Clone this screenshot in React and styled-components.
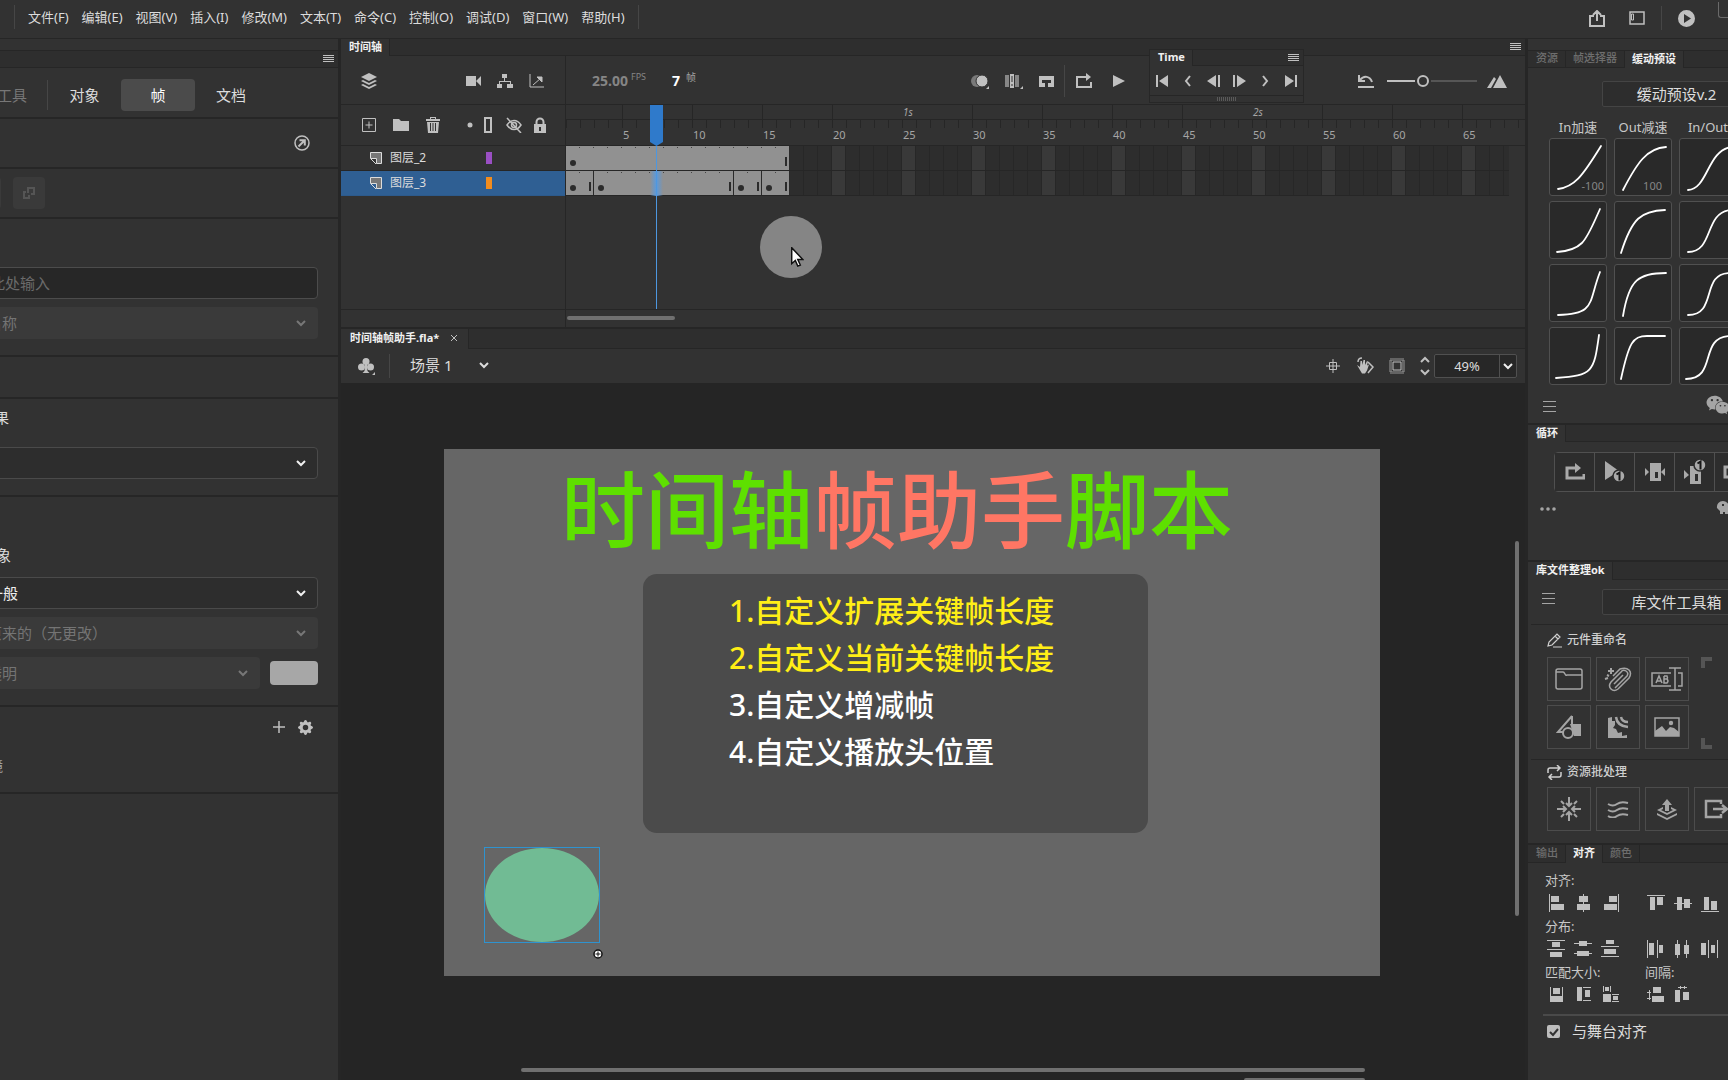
import React from "react";
import styled, { createGlobalStyle, css } from "styled-components";
import { FaWeixin } from "react-icons/fa";
import { BsGearFill } from "react-icons/bs";

const c = {
  panel: "#323232",
  bar: "#2e2e2e",
  line: "#262626",
  cell: "#2d2d2d",
  canvas: "#252525",
  field: "#3a3a3a",
  fieldDark: "#272727",
  icon: "#c0c0c0",
  text: "#dcdcdc",
  dim: "#6e6e6e",
  frame: "#919191",
};

const FRAME = 14;

const Global = createGlobalStyle`
  * { box-sizing: border-box; }
  body {
    margin: 0;
    background: ${c.panel};
    color: ${c.text};
    font-family: "Noto Sans", "Noto Sans CJK SC", sans-serif;
    font-size: 13px;
    line-height: 18px;
  }
  button, input, select { font: inherit; color: inherit; margin: 0; }
  button { background: none; border: 0; padding: 0; }
`;

/* ---------- layout ---------- */
const Screen = styled.div`
  display: flex;
  flex-direction: column;
  height: 100vh;
  overflow: hidden;
`;
const Body = styled.div`
  display: grid;
  grid-template-columns: 338px minmax(0, 1fr) 200px;
  column-gap: 3px;
  flex: 1;
  min-height: 0;
  background: ${c.line};
`;
const Side = styled.aside`
  background: ${c.panel};
  overflow: hidden;
`;
const Middle = styled.main`
  display: flex;
  flex-direction: column;
  min-width: 0;
  min-height: 0;
`;

/* ---------- menu bar ---------- */
const MenuBar = styled.header`
  display: flex;
  align-items: center;
  justify-content: space-between;
  flex: none;
  height: 39px;
  padding: 0 0 4px 14px;
  border-bottom: 1px solid ${c.line};
`;
const Menu = styled.nav`
  display: flex;
  align-items: center;
  gap: 13px;
`;
const MenuItem = styled.button`
  white-space: nowrap;
`;
const VLine = styled.span`
  flex: none;
  width: 1px;
  height: ${(p) => p.$h || 24}px;
  background: ${(p) => p.$color || "#464646"};
`;
const MenuTools = styled.div`
  display: flex;
  align-items: center;
  align-self: stretch;
  padding-top: 2px;
`;
const MenuTool = styled.button`
  display: grid;
  place-items: center;
  width: 40px;
  height: 32px;
  color: ${c.icon};
`;
const EdgeBox = styled.span`
  align-self: flex-start;
  width: 10px;
  height: 16px;
  margin-left: 12px;
  border: solid #6a6a6a;
  border-width: 0 0 1px 1px;
  border-bottom-left-radius: 3px;
`;

/* ---------- shared panel parts ---------- */
const DockStrip = styled.div`
  height: 12px;
  border-bottom: 1px solid ${c.line};
`;
const TabBar = styled.div`
  display: flex;
  align-items: stretch;
  flex: none;
  height: ${(p) => p.$h || 17}px;
  background: ${c.bar};
  border-bottom: 1px solid ${c.line};
`;
const Tab = styled.button`
  flex: none;
  padding: 0 7px 2px 8px;
  border-right: 1px solid ${c.line};
  font-size: 11px;
  line-height: 14px;
  font-weight: ${(p) => (p.$on ? 700 : 500)};
  color: ${(p) => (p.$on ? "#f0f0f0" : c.dim)};
  background: ${(p) => (p.$on ? c.panel : "transparent")};
  margin-bottom: ${(p) => (p.$on ? "-1px" : 0)};
  white-space: nowrap;
  & + & { padding-left: 7px; }
`;
const DocTab = styled(Tab).attrs({ as: "div" })`
  display: flex;
  align-items: center;
  gap: 11px;
  padding-left: 9px;
  padding-right: 10px;
`;
const MenuButton = styled.button`
  display: grid;
  place-items: center;
  width: 12px;
  height: 15px;
  margin-left: auto;
  margin-right: 4px;
  color: ${c.icon};
`;
const IconButton = styled.button`
  display: grid;
  place-items: center;
  flex: none;
  width: ${(p) => p.$w || 16}px;
  height: ${(p) => p.$h || 18}px;
  color: ${(p) => p.$color || c.icon};
`;
const Rule = styled.hr`
  height: ${(p) => p.$h || 1}px;
  margin: 0;
  border: 0;
  background: ${(p) => p.$color || c.line};
`;

/* ---------- properties panel ---------- */
const Section = styled.section`
  display: flex;
  flex-direction: column;
  gap: ${(p) => p.$gap || 8}px;
  margin-left: -36px;
  padding: ${(p) => p.$pad || "0"};
  min-height: ${(p) => p.$h || 0}px;
  border-bottom: 2px solid ${c.line};
`;
const ModeRow = styled.div`
  display: flex;
  align-items: center;
  height: 51px;
  padding-top: 5px;
  border-bottom: 2px solid ${c.line};
  margin-left: -3px;
`;
const ModeButton = styled.button`
  flex: none;
  width: ${(p) => p.$w}px;
  height: 32px;
  border-radius: 4px;
  font-size: 15px;
  text-align: center;
  color: ${(p) => (p.$off ? "#777" : p.$on ? "#fff" : c.text)};
  background: ${(p) => (p.$on ? "#4b4b4b" : "transparent")};
`;
const ToolLine = styled.div`
  display: flex;
  align-items: center;
  justify-content: ${(p) => p.$justify || "flex-end"};
  gap: ${(p) => p.$gap || 12}px;
  height: ${(p) => p.$h || 48}px;
  flex: none;
`;
const DisabledTool = styled.button`
  display: grid;
  place-items: center;
  width: 32px;
  height: 32px;
  border-radius: 4px;
  background: ${c.field};
  color: #555;
`;
const GroupLabel = styled.label`
  padding-left: ${(p) => p.$left || 17}px;
  font-size: ${(p) => p.$size || 15}px;
  line-height: 20px;
  color: ${(p) => p.$color || c.text};
  margin-bottom: ${(p) => p.$gap || 0}px;
`;
const TextBox = styled.input`
  width: 100%;
  height: 32px;
  padding: 0 10px;
  border: 1px solid #4c4c4c;
  border-radius: 4px;
  background: ${c.fieldDark};
  font-size: 15px;
  &::placeholder { color: #6b6b6b; opacity: 1; }
`;
const SelectWrap = styled.div`
  position: relative;
  flex: ${(p) => (p.$grow ? 1 : "none")};
  color: ${(p) => (p.$off ? "#777" : "#f0f0f0")};
  > svg {
    position: absolute;
    right: 12px;
    top: 12px;
    pointer-events: none;
  }
`;
const SelectBox = styled.select`
  display: block;
  appearance: none;
  width: 100%;
  height: 32px;
  padding: 0 30px 0 23px;
  border-radius: 4px;
  font-size: 15px;
  opacity: 1;
  ${(p) =>
    p.disabled
      ? css`border: 0; background: ${c.field}; color: #747474;`
      : css`border: 1px solid #4a4a4a; background: #2d2d2d; color: #eee;`}
`;
const SwatchRow = styled.div`
  display: flex;
  align-items: center;
  gap: 10px;
`;
const Swatch = styled.button`
  width: 48px;
  height: 24px;
  border-radius: 4px;
  background: #a7a7a7;
`;

/* ---------- timeline ---------- */
const Timeline = styled.section`
  position: relative;
  flex: none;
  background: ${c.panel};
  border-bottom: 2px solid ${c.line};
`;
const TimelineGrid = styled.div`
  display: grid;
  grid-template-columns: 225px minmax(0, 1fr);
`;
const LayerColumn = styled.div`
  border-right: 1px solid ${c.line};
`;
const FrameColumn = styled.div`
  position: relative;
  min-width: 0;
`;
const Tools = styled.div`
  display: flex;
  align-items: center;
  height: 49px;
  padding: 2px ${(p) => p.$right}px 0 ${(p) => p.$left}px;
  border-bottom: 1px solid ${c.line};
`;
const LayerTools = styled(Tools)`
  height: 41px;
  padding-top: 0;
`;
const Push = styled.span`
  flex: 1;
`;
const Space = styled.span`
  flex: none;
  width: ${(p) => p.$w}px;
`;
const LayerRow = styled.div`
  display: grid;
  grid-template-columns: 12px 88px 6px;
  align-items: center;
  column-gap: 8px;
  height: 25px;
  padding-left: 29px;
  border-bottom: 1px solid ${(p) => (p.$on ? "#2c5a8c" : c.line)};
  background: ${(p) => (p.$on ? "#2f5f93" : "transparent")};
  font-size: 12px;
`;
const LayerName = styled.span`
  white-space: nowrap;
`;
const LayerColor = styled.span`
  width: 6px;
  height: 12px;
  background: ${(p) => p.$color};
`;
const Lower = styled.div`
  height: 114px;
  border-bottom: 1px solid ${c.line};
`;
const ScrollStrip = styled.div`
  display: flex;
  align-items: center;
  height: 17px;
  padding: 0 0 1px 1px;
`;
const Thumb = styled.div`
  flex: none;
  width: ${(p) => p.$w};
  height: ${(p) => p.$h};
  border-radius: 2px;
  background: #707070;
`;
const Fps = styled.span`
  color: #858585;
  font-size: 14px;
  font-weight: 700;
  margin-right: 3px;
`;
const Unit = styled.sup`
  align-self: flex-start;
  margin-top: 11px;
  font-size: ${(p) => p.$size}px;
  line-height: 16px;
  color: ${(p) => p.$color || "#a0a0a0"};
`;
const FrameNo = styled.span`
  margin-left: 26px;
  margin-right: 6px;
  width: 8px;
  font-size: 14px;
  font-weight: 700;
  color: #fff;
`;
const Zoomer = styled.input`
  appearance: none;
  width: 90px;
  height: 14px;
  margin: 0 10px 0 12px;
  background: linear-gradient(90deg, #c0c0c0 28px, transparent 28px 44px, #565656 44px) center / 100% 2px no-repeat;
  &::-webkit-slider-thumb {
    appearance: none;
    width: 12px;
    height: 12px;
    border: 2px solid #c0c0c0;
    border-radius: 50%;
    background: ${c.panel};
  }
`;
const Ruler = styled.div`
  height: 41px;
  overflow: hidden;
  border-bottom: 1px solid ${c.line};
`;
const Seconds = styled.div`
  display: flex;
  height: 15px;
  border-bottom: 1px solid ${c.line};
`;
const SecondCell = styled.span`
  flex: none;
  width: ${(p) => p.$n * FRAME}px;
  border-left: 1px solid ${(p) => (p.$line ? c.line : "transparent")};
  font-size: 10px;
  line-height: 14px;
  font-style: italic;
  color: #a5a5a5;
`;
const Numbers = styled.div`
  display: flex;
  height: 25px;
  padding-top: 7px;
  background: repeating-linear-gradient(90deg, ${c.line} 0 1px, transparent 1px ${FRAME}px) top / 100% 8px no-repeat;
`;
const NumberCell = styled.span`
  flex: none;
  width: ${(p) => p.$n * FRAME}px;
  padding-left: 1px;
  font-size: 11px;
  line-height: 16px;
  color: #a5a5a5;
`;
const Track = styled.div`
  display: flex;
  height: 25px;
  margin-right: 16px;
  border-bottom: 1px solid ${c.line};
  background:
    repeating-linear-gradient(90deg, transparent 0 56px, #393939 56px 69px, transparent 69px 70px),
    repeating-linear-gradient(90deg, transparent 0 13px, #272727 13px 14px),
    ${c.cell};
`;
const Span = styled.div`
  display: flex;
  align-items: flex-end;
  justify-content: space-between;
  flex: none;
  width: ${(p) => p.$n * FRAME}px;
  padding: 0 3px 4px 4px;
  border-right: 1px solid #2a2a2a;
  background:
    repeating-linear-gradient(90deg, transparent 0 13px, #444 13px 14px) 0 1px / 100% 1px no-repeat,
    ${c.frame};
`;
const KeyDot = styled.i`
  width: 6px;
  height: 6px;
  border-radius: 50%;
  background: #2b2b2b;
`;
const EndBar = styled.i`
  width: 2px;
  height: 9px;
  margin-right: -1px;
  background: #2b2b2b;
`;
const Playhead = styled.div`
  position: absolute;
  left: 84px;
  top: 49px;
  width: 13px;
  height: 204px;
  pointer-events: none;
`;
const HeadFlag = styled.div`
  height: 41px;
  background: #2f7acb;
  clip-path: polygon(0 0, 100% 0, 100% 37px, 50% 100%, 0 37px);
`;
const HeadGlow = styled.div`
  height: 25px;
  margin-top: 25px;
  background: linear-gradient(90deg, transparent, #5a9ade 50%, transparent);
`;
const HeadLine = styled.div`
  position: absolute;
  left: 6px;
  top: 41px;
  bottom: 0;
  width: 1px;
  background: #4d97e0;
`;
const ClickHalo = styled.div`
  position: absolute;
  left: 419px;
  top: 177px;
  width: 62px;
  height: 62px;
  border-radius: 50%;
  background: #858585;
  > svg { position: absolute; left: 31px; top: 31px; }
`;
const FloatPanel = styled.section`
  position: absolute;
  right: 221px;
  top: 10px;
  width: 155px;
  border: 1px solid #272727;
  background: ${c.panel};
`;
const FloatButtons = styled.div`
  display: flex;
  justify-content: space-between;
  align-items: center;
  height: 29px;
  padding: 0 4px;
`;
const Grip = styled.div`
  height: 7px;
  border-top: 1px solid ${c.line};
  background: repeating-linear-gradient(90deg, #5a5a5a 0 1px, transparent 1px 2px) center / 20px 4px no-repeat;
`;

/* ---------- document ---------- */
const DocTools = styled.div`
  display: flex;
  align-items: center;
  flex: none;
  height: 34px;
  padding: 0 8px 0 16px;
  background: ${c.panel};
`;
const SceneButton = styled.button`
  display: flex;
  align-items: center;
  gap: 27px;
  margin-left: 20px;
  padding-bottom: 2px;
  font-size: 15px;
`;
const Stepper = styled.div`
  display: grid;
  margin: 0 2px 0 13px;
`;
const ZoomField = styled.div`
  display: flex;
  height: 24px;
  width: 83px;
  border: 1px solid #505050;
  border-radius: 2px;
  background: ${c.fieldDark};
`;
const ZoomInput = styled.input`
  width: 65px;
  border: 0;
  border-right: 1px solid #505050;
  background: none;
  padding: 0;
  text-align: center;
`;
const CloseTab = styled.button`
  width: 8px;
  height: 16px;
  color: ${c.icon};
`;
const CanvasArea = styled.section`
  display: grid;
  grid-template-columns: minmax(0, 1fr) 16px;
  grid-template-rows: minmax(0, 1fr) 12px;
  flex: 1;
  min-height: 0;
  background: ${c.canvas};
`;
const CanvasView = styled.div`
  overflow: hidden;
  padding: 66px 129px 0 103px;
`;
const Stage = styled.div`
  position: relative;
  aspect-ratio: 16 / 9;
  background: #666;
`;
const VScroll = styled.div`
  padding: 158px 0 0 6px;
`;
const HScroll = styled.div`
  display: flex;
  flex-direction: column;
  gap: 6px;
  align-items: flex-end;
  padding-right: 160px;
  padding-left: 180px;
  grid-column: 1 / -1;
`;
const StageTitle = styled.h1`
  position: absolute;
  left: 117px;
  top: 7px;
  margin: 0;
  font-family: "Noto Sans CJK SC", sans-serif;
  font-size: 84px;
  line-height: 100px;
  font-weight: 500;
  white-space: nowrap;
  color: #5ee000;
`;
const TitleAccent = styled.span`
  color: #ff7664;
`;
const StageCard = styled.ol`
  position: absolute;
  left: 199px;
  top: 125px;
  width: 505px;
  height: 259px;
  margin: 0;
  padding: 13px 0 0 86px;
  border-radius: 14px;
  background: #4b4b4b;
  list-style: none;
`;
const StageLine = styled.li`
  font-size: 30px;
  line-height: 47px;
  font-weight: 500;
  white-space: nowrap;
  color: ${(p) => (p.$hot ? "#ffee16" : "#fff")};
`;
const Selection = styled.div`
  position: absolute;
  left: 40px;
  top: 398px;
  width: 116px;
  height: 96px;
  border: 1px solid #2f93cf;
`;
const Oval = styled.div`
  height: 100%;
  border-radius: 50%;
  background: #71bb94;
`;
const Pivot = styled.div`
  position: absolute;
  left: 149px;
  top: 500px;
  width: 10px;
  height: 10px;
  > svg { display: block; }
`;

/* ---------- right dock ---------- */
const Block = styled.section`
  display: flex;
  flex-direction: column;
  height: ${(p) => (p.$h ? p.$h + "px" : "auto")};
  padding: ${(p) => p.$pad};
  border-bottom: 2px solid ${c.line};
`;
const WideButton = styled.button`
  flex: none;
  width: 160px;
  height: 26px;
  margin-left: auto;
  margin-right: -34px;
  padding-right: 11px;
  border: 1px solid #444;
  border-radius: 2px;
  background: #2d2d2d;
  font-size: 15px;
  text-align: center;
  white-space: nowrap;
`;
const EaseGrid = styled.div`
  display: grid;
  grid-template-columns: repeat(3, 58px);
  gap: 5px 7px;
  padding-left: 21px;
`;
const EaseHead = styled.span`
  height: 18px;
  margin-top: 11px;
  margin-bottom: 2px;
  text-align: center;
  white-space: nowrap;
  color: #c8c8c8;
`;
const EaseTile = styled.button`
  position: relative;
  width: 58px;
  height: 58px;
  border: 1px solid #505050;
  border-radius: 3px;
  background: #292929;
  color: #fff;
  > svg { display: block; }
`;
const EaseValue = styled.span`
  position: absolute;
  right: ${(p) => p.$r}px;
  bottom: 2px;
  font-size: 11px;
  line-height: 14px;
  color: #868686;
`;
const Foot = styled.div`
  display: flex;
  align-items: flex-start;
  justify-content: space-between;
  margin-top: 8px;
  margin-right: -4px;
  margin-left: ${(p) => p.$left}px;
`;
const LoopGroup = styled.div`
  display: flex;
  flex: none;
  width: 240px;
  margin-left: 26px;
  border: 1px solid #505050;
  border-radius: 4px;
`;
const LoopButton = styled.button`
  display: grid;
  place-items: center;
  flex: none;
  width: 40px;
  height: 38px;
  border-right: 1px solid #505050;
  background: #2d2d2d;
  color: #a9a9a9;
`;
const LibraryHead = styled.div`
  display: flex;
  align-items: flex-start;
  padding-left: 14px;
`;
const LibraryBody = styled.div`
  display: flex;
  flex-direction: column;
  margin-top: 9px;
  > hr { margin-left: 3px; }
`;
const SubHead = styled.h3`
  display: flex;
  align-items: center;
  gap: 5px;
  height: 20px;
  margin: ${(p) => p.$margin};
  padding-left: 19px;
  font-size: 12px;
  font-weight: 500;
  color: #cfcfcf;
`;
const TileArea = styled.div`
  display: flex;
  gap: 12px;
  padding-left: 19px;
  margin-bottom: 10px;
`;
const TileGrid = styled.div`
  display: grid;
  grid-template-columns: repeat(${(p) => p.$cols}, 44px);
  gap: 4px 5px;
`;
const Tile = styled.button`
  display: grid;
  place-items: center;
  width: 44px;
  height: 44px;
  border: 1px solid #4c4c4c;
  color: #a5a5a5;
`;
const Corners = styled.div`
  display: flex;
  flex-direction: column;
  justify-content: space-between;
  color: #555;
`;
const AlignBlock = styled.section`
  padding: 8px 0 0 17px;
`;
const AlignGrid = styled.div`
  display: grid;
  grid-template-columns: 100px 100px;
  gap: 5px 0;
  width: 200px;
  color: #c8c8c8;
`;
const AlignIcons = styled.div`
  display: flex;
  gap: 9px;
  padding-left: 2px;
`;
const AlignRule = styled(Rule)`
  margin-top: 10px;
  margin-left: -2px;
`;
const CheckRow = styled.label`
  display: flex;
  align-items: center;
  gap: 12px;
  margin-top: 6px;
  padding-left: 2px;
  font-size: 15px;
`;
const Check = styled.input`
  appearance: none;
  width: 13px;
  height: 13px;
  border-radius: 2px;
  background: #bdbdbd url("data:image/svg+xml,%3Csvg xmlns='http://www.w3.org/2000/svg' viewBox='0 0 13 13'%3E%3Cpath d='M3 7l3 3 5-6' fill='none' stroke='%23323232' stroke-width='2'/%3E%3C/svg%3E");
`;

/* ---------- drawings ---------- */
const Svg = ({ w = 16, h = w, line, sw = 1.5, children }) => (
  <svg
    width={w}
    height={h}
    viewBox={`0 0 ${w} ${h}`}
    fill={line ? "none" : "currentColor"}
    stroke={line ? "currentColor" : "none"}
    strokeWidth={sw}
    aria-hidden="true"
  >
    {children}
  </svg>
);
const Burger = ({ w = 11, gap = 1, t = 1, n = 4 }) => (
  <Svg w={w} h={(n - 1) * (gap + t) + t}>
    {Array.from({ length: n }, (_, i) => (
      <rect key={i} y={i * (gap + t)} width={w} height={t} />
    ))}
  </Svg>
);
const Chevron = ({ up }) => (
  <Svg w={10} h={8} line sw={2}>
    <path d={up ? "M1 6l4-4 4 4" : "M1 2l4 4 4-4"} />
  </Svg>
);
const Rects = ({ list }) => (
  <Svg w={18}>
    {list.map(([x, y, w, h], i) => (
      <rect key={i} x={x} y={y} width={w} height={h} />
    ))}
  </Svg>
);

const menus = [
  "文件(F)", "编辑(E)", "视图(V)", "插入(I)", "修改(M)", "文本(T)",
  "命令(C)", "控制(O)", "调试(D)", "窗口(W)", "帮助(H)",
];

const curves = [
  ["M8 50C24 48 32 38 51 7", "M8 51C22 24 32 9 51 8", "M8 51C28 50 27 12 51 8"],
  ["M7 50C34 48 36 38 50 7", "M6 51C17 16 26 9 50 8", "M8 50C34 50 24 11 50 8"],
  ["M8 50C46 49 38 38 50 7", "M8 51C14 14 24 8 51 8", "M8 50C38 50 20 8 50 8"],
  ["M6 50C44 48 44 42 49 7", "M6 51C14 14 18 8 32 8H50", "M6 51C38 51 18 9 50 8"],
];

const layers = [
  { name: "图层_2", color: "#9a4fc4", spans: [16] },
  { name: "图层_3", color: "#f28c1e", spans: [2, 10, 2, 2], on: true },
];

const marks = Array.from({ length: 13 }, (_, i) => (i + 1) * 5);

const align = {
  h: [
    ["左对齐", [[2, 0, 1, 18], [4, 2, 8, 6], [4, 10, 13, 6]]],
    ["水平居中", [[9, 0, 1, 18], [5, 2, 9, 6], [3, 10, 13, 6]]],
    ["右对齐", [[17, 0, 1, 18], [8, 2, 8, 6], [3, 10, 13, 6]]],
  ],
  v: [
    ["顶对齐", [[0, 1, 18, 1], [3, 3, 5, 13], [10, 3, 6, 8]]],
    ["垂直居中", [[0, 9, 18, 1], [3, 3, 5, 13], [10, 5, 6, 9]]],
    ["底对齐", [[0, 17, 18, 1], [3, 3, 5, 13], [10, 7, 6, 9]]],
  ],
  dh: [
    ["顶部分布", [[0, 0, 18, 1], [5, 2, 8, 5], [0, 9, 18, 1], [3, 12, 12, 5]]],
    ["垂直居中分布", [[0, 3, 18, 1], [5, 1, 8, 5], [0, 13, 18, 1], [3, 11, 12, 5]]],
    ["底部分布", [[5, 0, 8, 4], [0, 6, 18, 1], [3, 9, 12, 5], [0, 16, 18, 1]]],
  ],
  dv: [
    ["左侧分布", [[0, 0, 1, 18], [2, 3, 5, 12], [10, 0, 1, 18], [12, 5, 4, 8]]],
    ["水平居中分布", [[3, 0, 1, 18], [1, 4, 5, 11], [12, 0, 1, 18], [10, 5, 5, 9]]],
    ["右侧分布", [[0, 3, 5, 12], [7, 0, 1, 18], [10, 5, 4, 8], [16, 0, 1, 18]]],
  ],
  size: [
    ["匹配宽度", [[3, 1, 1, 9], [6, 2, 7, 6], [15, 1, 1, 9], [3, 10, 13, 6]]],
    ["匹配高度", [[3, 1, 5, 14], [9, 1, 8, 1], [11, 4, 5, 7], [9, 14, 8, 1]]],
    ["匹配宽高", [[2, 0, 1, 6], [4, 1, 4, 4], [9, 0, 1, 6], [2, 8, 8, 8], [11, 8, 7, 1], [12, 10, 5, 4], [11, 15, 7, 1]]],
  ],
  space: [
    ["垂直间隔", [[2, 4, 1, 10], [0, 6, 4, 1], [0, 12, 4, 1], [6, 1, 8, 6], [5, 10, 12, 6]]],
    ["水平间隔", [[4, 1, 9, 1], [6, 0, 1, 3], [10, 0, 1, 3], [1, 4, 5, 12], [9, 6, 6, 8]]],
  ],
};

const AlignSet = ({ items }) => (
  <AlignIcons>
    {items.map(([label, list]) => (
      <IconButton key={label} $w={18} aria-label={label}>
        <Rects list={list} />
      </IconButton>
    ))}
  </AlignIcons>
);

const Picker = ({ id, label, value, off, grow }) => (
  <SelectWrap $off={off} $grow={grow}>
    <SelectBox id={id} aria-label={label} disabled={off} defaultValue={value}>
      <option>{value}</option>
    </SelectBox>
    <Chevron />
  </SelectWrap>
);

const Properties = () => (
  <Side>
    <DockStrip />
    <TabBar>
      <MenuButton aria-label="面板菜单"><Burger /></MenuButton>
    </TabBar>
    <ModeRow>
      <ModeButton $w={30} $off>工具</ModeButton>
      <Space $w={20} />
      <VLine $h={30} />
      <ModeButton $w={73}>对象</ModeButton>
      <ModeButton $w={74} $on>帧</ModeButton>
      <ModeButton $w={72}>文档</ModeButton>
    </ModeRow>
    <Section $pad="0 28px 0 0">
      <ToolLine>
        <IconButton aria-label="转到">
          <Svg w={16} line>
            <circle cx="8" cy="8" r="7" />
            <path d="M4.500 11.500L10 6M5.500 5.200H10.800V10.500" strokeWidth="2" />
          </Svg>
        </IconButton>
      </ToolLine>
    </Section>
    <Section $pad="0 0 0 5px">
      <ToolLine $justify="flex-start">
        <DisabledTool disabled aria-label="创建补间" />
        <DisabledTool disabled aria-label="交换">
          <Svg w={16} line sw={2}>
            <path d="M7 8V3h6v6h-3" />
            <path d="M5 7H3v6h5v-3" />
          </Svg>
        </DisabledTool>
      </ToolLine>
    </Section>
    <Section $pad="48px 20px 16px 0">
      <TextBox aria-label="标签名称" placeholder="在此处输入" />
      <Picker label="标签类型" value="名称" off />
    </Section>
    <Section $h={42} />
    <Section $pad="9px 20px 16px 0">
      <GroupLabel htmlFor="effect" $size={14} $gap={11}>效果</GroupLabel>
      <Picker id="effect" value="" />
    </Section>
    <Section $pad="48px 20px 16px 0">
      <GroupLabel htmlFor="blend" $gap={4}>对象</GroupLabel>
      <Picker id="blend" value="一般" />
      <Picker label="呈现" value="原来的（无更改）" off />
      <SwatchRow>
        <Picker label="背景" value="透明" off grow />
        <Swatch aria-label="背景颜色" />
      </SwatchRow>
    </Section>
    <Section $pad="10px 25px 16px 0" $gap={19}>
      <ToolLine $h={20} $gap={11}>
        <IconButton $w={14} aria-label="添加滤镜">
          <Svg w={12} line><path d="M6 0v12M0 6h12" /></Svg>
        </IconButton>
        <IconButton aria-label="滤镜选项"><BsGearFill size={15} /></IconButton>
      </ToolLine>
      <GroupLabel as="span" $left={11} $size={14} $color="#a0a0a0">滤镜</GroupLabel>
    </Section>
  </Side>
);

const Frames = () => (
  <FrameColumn>
    <Tools $left={26} $right={18}>
      <Fps>25.00</Fps>
      <Unit $size={9} $color="#858585">FPS</Unit>
      <FrameNo>7</FrameNo>
      <Unit $size={10}>帧</Unit>
      <Push />
      <IconButton $w={18} aria-label="绘图纸外观">
        <Svg w={18} h={16}>
          <circle cx="6" cy="8" r="6" opacity=".5" />
          <circle cx="11" cy="8" r="6" stroke={c.panel} strokeWidth="1" />
          <path d="M18 13v3h-3z" />
        </Svg>
      </IconButton>
      <Space $w={16} />
      <IconButton $w={18} aria-label="编辑多个帧">
        <Svg w={18} h={16}>
          <path d="M0 2h4v12H0zM10 2h4v12h-4z" opacity=".6" />
          <path d="M5 1h4v14H5zM6.500 3v6h1V3zM6.500 11v2h1v-2z" fillRule="evenodd" />
          <path d="M18 13v3h-3z" />
        </Svg>
      </IconButton>
      <Space $w={16} />
      <IconButton aria-label="插入帧">
        <Svg w={16} h={14}>
          <path d="M0 2h15v11H9V9h3V6H3v3h3v4H0z" />
          <path d="M7 8h2v5H7z" fill={c.panel} />
        </Svg>
      </IconButton>
      <Space $w={9} />
      <VLine $h={32} />
      <Space $w={11} />
      <IconButton aria-label="循环">
        <Svg w={16} line sw={2}>
          <path d="M5 4H1v10h14V9M5 4h6" />
          <path d="M10 0v8l5-4z" fill="currentColor" stroke="none" />
        </Svg>
      </IconButton>
      <Space $w={19} />
      <IconButton aria-label="播放">
        <Svg w={14}><path d="M1 1v12l12-6z" /></Svg>
      </IconButton>
      <Space $w={230} />
      <IconButton $w={18} aria-label="重置缩放">
        <Svg w={16} line sw={2}>
          <path d="M1 2v6h6M2 7c4-5 10-4 12 2M0 14h16" />
        </Svg>
      </IconButton>
      <Zoomer type="range" min="0" max="100" defaultValue="38" aria-label="时间轴缩放" />
      <IconButton $w={20} aria-label="放大时间轴">
        <Svg w={20} h={14}>
          <path d="M6 14l7-13 7 13zM0 14L7 3l2 2-5 9z" />
        </Svg>
      </IconButton>
    </Tools>
    <Ruler>
      <Seconds>
        <SecondCell $n={4} />
        {marks.map((m) => (
          <SecondCell key={m} $n={5} $line={m % 25 !== 0}>{m % 25 === 0 ? `${m / 25}s` : ""}</SecondCell>
        ))}
      </Seconds>
      <Numbers>
        <NumberCell $n={4} />
        {marks.map((m) => <NumberCell key={m} $n={5}>{m}</NumberCell>)}
      </Numbers>
    </Ruler>
    {layers.map((l) => (
      <Track key={l.name}>
        {l.spans.map((n, i) => (
          <Span key={i} $n={n}><KeyDot /><EndBar /></Span>
        ))}
      </Track>
    ))}
    <Lower />
    <ScrollStrip><Thumb $w="108px" $h="4px" /></ScrollStrip>
    <Playhead><HeadFlag /><HeadGlow /><HeadLine /></Playhead>
  </FrameColumn>
);

const LayerPane = () => (
  <LayerColumn>
    <Tools $left={20} $right={20}>
      <IconButton aria-label="图层">
        <Svg w={16}>
          <path d="M8 0l8 4-8 4-8-4zM2 7l6 3 6-3 2 1-8 4-8-4zM2 11l6 3 6-3 2 1-8 4-8-4z" />
        </Svg>
      </IconButton>
      <Push />
      <IconButton aria-label="摄像头">
        <Svg w={16} h={12}><path d="M1 1h10v10H1zM11 6l5-5v10z" /></Svg>
      </IconButton>
      <Space $w={16} />
      <IconButton aria-label="父级视图">
        <Svg w={16} h={14}>
          <path d="M5 0h5v4H8v3h6v3h2v4h-6v-4h3V8H3v2h2v4H0v-4h2V7h5V4H5z" />
        </Svg>
      </IconButton>
      <Space $w={16} />
      <IconButton aria-label="图表">
        <Svg w={16} h={14} line sw={1}>
          <path d="M1 0v13h14M4 11l8-7" />
          <path d="M13 3v5L8 3z" fill="currentColor" />
        </Svg>
      </IconButton>
    </Tools>
    <LayerTools $left={20} $right={17}>
      <IconButton aria-label="新建图层">
        <Svg w={14} line sw={1}><path d="M.5.5h13v13H.5zM7 3.500v7M3.500 7h7" /></Svg>
      </IconButton>
      <Space $w={16} />
      <IconButton aria-label="新建文件夹">
        <Svg w={16} h={14}><path d="M0 1h6l2 2h8v10H0z" /></Svg>
      </IconButton>
      <Space $w={16} />
      <IconButton aria-label="删除">
        <Svg w={16}>
          <path d="M5 0h6v2h4v2H1V2h4zM6 1v1h4V1zM2 5h12l-1 11H3zM5 6v8h1V6zM7.500 6v8h1V6zM10 6v8h1V6z" fillRule="evenodd" />
        </Svg>
      </IconButton>
      <Push />
      <IconButton $w={8} aria-label="突出显示"><Svg w={6}><circle cx="3" cy="3" r="2.500" /></Svg></IconButton>
      <Space $w={10} />
      <IconButton $w={8} aria-label="轮廓"><Svg w={8} h={16} line sw={2}><path d="M1 1h6v14H1z" /></Svg></IconButton>
      <Space $w={14} />
      <IconButton aria-label="隐藏">
        <Svg w={16} line>
          <path d="M1 8c4-6 10-6 14 0-4 6-10 6-14 0zM1 1l14 15" />
          <circle cx="8" cy="8" r="2.500" />
        </Svg>
      </IconButton>
      <Space $w={10} />
      <IconButton aria-label="锁定">
        <Svg w={14} h={16}>
          <path d="M1 7h12v9H1zM6 10v4h2v-4z" fillRule="evenodd" />
          <path d="M3.500 7V5a3.500 3.500 0 017 0v2" fill="none" stroke="currentColor" strokeWidth="2" />
        </Svg>
      </IconButton>
    </LayerTools>
    {layers.map((l) => (
      <LayerRow key={l.name} $on={l.on}>
        <Svg w={12} line sw={1}>
          <path d="M.5.5h11v11h-5v-5h-6z" fill="#777" />
          <path d="M1 7l5 5" />
        </Svg>
        <LayerName>{l.name}</LayerName>
        <LayerColor $color={l.color} />
      </LayerRow>
    ))}
    <Lower />
  </LayerColumn>
);

const TimePanel = () => (
  <FloatPanel>
    <TabBar $h={16}>
      <Tab $on>Time</Tab>
      <MenuButton aria-label="Time 菜单"><Burger /></MenuButton>
    </TabBar>
    <FloatButtons>
      <IconButton aria-label="第一帧"><Svg w={14}><path d="M1 1h2v12H1zM13 1v12L4 7z" /></Svg></IconButton>
      <IconButton aria-label="上一关键帧"><Svg w={14} line sw={2}><path d="M9 2L5 7l4 5" /></Svg></IconButton>
      <IconButton aria-label="后退一帧"><Svg w={14}><path d="M9 1v12L0 7zM11 1h2v12h-2z" /></Svg></IconButton>
      <IconButton aria-label="前进一帧"><Svg w={14}><path d="M1 1h2v12H1zM5 1v12l9-6z" /></Svg></IconButton>
      <IconButton aria-label="下一关键帧"><Svg w={14} line sw={2}><path d="M5 2l4 5-4 5" /></Svg></IconButton>
      <IconButton aria-label="最后一帧"><Svg w={14}><path d="M11 1h2v12h-2zM1 1v12l9-6z" /></Svg></IconButton>
    </FloatButtons>
    <Grip />
  </FloatPanel>
);

const Document = () => (
  <>
    <TabBar $h={20}>
      <DocTab $on>
        <span>时间轴帧助手.fla*</span>
        <CloseTab aria-label="关闭"><Svg w={8} line sw={1}><path d="M1 1l6 6M7 1L1 7" /></Svg></CloseTab>
      </DocTab>
    </TabBar>
    <DocTools>
      <IconButton $w={18} aria-label="编辑元件">
        <Svg w={18}>
          <circle cx="9" cy="4.500" r="3.500" />
          <circle cx="4.500" cy="10" r="3.500" />
          <circle cx="13.500" cy="10" r="3.500" />
          <path d="M8 6h2v4l.5 4 2 2h-7l2-2L8 10zM18 15v3h-3z" />
        </Svg>
      </IconButton>
      <Space $w={14} />
      <VLine />
      <SceneButton><span>场景 1</span><Chevron /></SceneButton>
      <Push />
      <IconButton aria-label="居中舞台">
        <Svg w={14} line sw={1}><path d="M3.500 3.500h7v7h-7zM7 0v14M0 7h14" /></Svg>
      </IconButton>
      <Space $w={15} />
      <IconButton $w={18} aria-label="旋转工具">
        <Svg w={18} line sw={1.500}>
          <path d="M2 5c0-3 2-4 4-4M12 5l5 5-5 6" />
          <path d="M1 8l3 2 .500-6h1.500l.5 4 1-5h1.500v5l2-4 1 .5-1 4 2-1-2 6-2 3H6z" fill="currentColor" stroke="none" />
        </Svg>
      </IconButton>
      <Space $w={15} />
      <IconButton aria-label="剪切舞台外内容">
        <Svg w={16} line sw={1}>
          <path d="M1.500 1.500h13v13h-13z" strokeWidth="3" strokeDasharray="1 1" opacity=".7" />
          <path d="M4 4h8v8H4z" />
        </Svg>
      </IconButton>
      <Stepper>
        <IconButton $w={14} $h={12} aria-label="放大"><Chevron up /></IconButton>
        <IconButton $w={14} $h={12} aria-label="缩小"><Chevron /></IconButton>
      </Stepper>
      <ZoomField>
        <ZoomInput aria-label="缩放比例" defaultValue="49%" />
        <IconButton $h={22} $color="#eee" aria-label="缩放列表"><Chevron /></IconButton>
      </ZoomField>
    </DocTools>
    <CanvasArea>
      <CanvasView>
        <Stage>
          <StageTitle>时间轴<TitleAccent>帧助手</TitleAccent>脚本</StageTitle>
          <StageCard>
            <StageLine $hot>1.自定义扩展关键帧长度</StageLine>
            <StageLine $hot>2.自定义当前关键帧长度</StageLine>
            <StageLine>3.自定义增减帧</StageLine>
            <StageLine>4.自定义播放头位置</StageLine>
          </StageCard>
          <Selection><Oval /></Selection>
          <Pivot>
            <Svg w={10}>
              <circle cx="5" cy="5" r="4" fill="#fff" stroke="#111" strokeWidth="1.500" />
              <path d="M5 2.500v5M2.500 5h5" stroke="#111" strokeWidth="1" />
            </Svg>
          </Pivot>
        </Stage>
      </CanvasView>
      <VScroll><Thumb $w="4px" $h="375px" /></VScroll>
      <HScroll>
        <Thumb $w="100%" $h="4px" />
        <Thumb $w="121px" $h="4px" />
      </HScroll>
    </CanvasArea>
  </>
);

const RightDock = () => (
  <Side>
    <DockStrip />
    <TabBar>
      <Tab>资源</Tab><Tab>帧选择器</Tab><Tab $on>缓动预设</Tab>
    </TabBar>
    <Block $h={357} $pad="13px 0 0">
      <WideButton>缓动预设v.2</WideButton>
      <EaseGrid>
        {["In加速", "Out减速", "In/Out"].map((t) => <EaseHead key={t}>{t}</EaseHead>)}
      </EaseGrid>
      <EaseGrid>
        {curves.flatMap((row, r) =>
          row.map((d, i) => (
            <EaseTile key={`${r}${i}`} aria-label={`缓动 ${r + 1}-${i + 1}`}>
              <Svg w={56} line sw={1.8}><path d={d} strokeLinecap="round" /></Svg>
              {r === 0 && i === 0 && <EaseValue $r={2}>-100</EaseValue>}
              {r === 0 && i === 1 && <EaseValue $r={9}>100</EaseValue>}
            </EaseTile>
          ))
        )}
      </EaseGrid>
      <Foot $left={15}>
        <IconButton $w={13} $h={27} $color="#a5a5a5" aria-label="菜单"><Burger w={13} gap={4} n={3} /></IconButton>
        <IconButton $w={28} $color="#a5a5a5" aria-label="微信"><FaWeixin size={24} /></IconButton>
      </Foot>
    </Block>
    <TabBar><Tab $on>循环</Tab></TabBar>
    <Block $h={120} $pad="10px 0 0">
      <LoopGroup>
        <LoopButton aria-label="循环播放">
          <Svg w={20} h={18} line sw={3}>
            <path d="M8 5H2v10h17v-4M7 5h4" />
            <path d="M10 0v10l6-5z" fill="currentColor" stroke="none" />
          </Svg>
        </LoopButton>
        <LoopButton aria-label="播放一次">
          <Svg w={22}>
            <path d="M1 0v19l14-9z" />
            <circle cx="15" cy="15" r="6" stroke="#2d2d2d" />
            <path d="M12.500 13.500l3-2V19.500" fill="none" stroke="#161616" strokeWidth="2" />
          </Svg>
        </LoopButton>
        <LoopButton aria-label="标记范围">
          <Svg w={20} h={18}>
            <path d="M0 5v8l4-4zM20 5v8l-4-4zM5 0h11v18H5zM10 9v6h3V9z" fillRule="evenodd" />
          </Svg>
        </LoopButton>
        <LoopButton aria-label="标记单帧">
          <Svg w={24} h={28}>
            <path d="M1 12v9l5-4zM7 8h11v18H7zM12 16v7h3v-7z" fillRule="evenodd" />
            <circle cx="17" cy="7" r="6" stroke="#2d2d2d" />
            <path d="M14.500 5.500l3-2V11.500" fill="none" stroke="#161616" strokeWidth="2" />
          </Svg>
        </LoopButton>
        <LoopButton aria-label="更多循环">
          <Svg w={24} h={14} line sw={3}><path d="M20 2H2v10h18" /></Svg>
        </LoopButton>
      </LoopGroup>
      <Foot $left={12}>
        <IconButton $color="#a5a5a5" aria-label="更多">
          <Svg w={16} h={4}><circle cx="2" cy="2" r="1.800" /><circle cx="8" cy="2" r="1.800" /><circle cx="14" cy="2" r="1.800" /></Svg>
        </IconButton>
        <IconButton $h={14} $color="#a5a5a5" aria-label="帮助">
          <Svg w={16} h={16}>
            <path d="M7 1a6 6 0 016 6v7H9v-2H7v2H4v-3L1 8a6 6 0 016-7zM6 4v2h2V4z" fillRule="evenodd" />
          </Svg>
        </IconButton>
      </Foot>
    </Block>
    <TabBar $h={18}><Tab $on>库文件整理ok</Tab></TabBar>
    <Block $h={265} $pad="9px 0 0">
      <LibraryHead>
        <IconButton $w={13} $color="#a5a5a5" aria-label="菜单"><Burger w={13} gap={4} n={3} /></IconButton>
        <WideButton>库文件工具箱</WideButton>
      </LibraryHead>
      <LibraryBody>
        <Rule />
        <SubHead $margin="5px 0 7px">
          <Svg w={15} line sw={1.200}>
            <path d="M1 13l1-4 8-8 3 3-8 8zM8 3l3 3M6 14h9" />
          </Svg>
          元件重命名
        </SubHead>
        <TileArea>
          <TileGrid $cols={3}>
            <Tile aria-label="文件夹">
              <Svg w={28} h={22} line><path d="M1 3q0-2 2-2h22q2 0 2 2v16q0 2-2 2H3q-2 0-2-2zM1 4h7q1 0 2 2t2 1h15" /></Svg>
            </Tile>
            <Tile aria-label="附加">
              <Svg w={28} h={26} line>
                <path d="M11 22l12-12q2-3-1-5t-5 1L7 16q-3 4 0 7t7 0l11-11q3-5 0-8t-9-1L9 10M10 18l9-9" />
                <path d="M7 2v6M4 5h6M1 13l3-1M3 9l2 1" strokeWidth="2" />
              </Svg>
            </Tile>
            <Tile aria-label="重命名">
              <Svg w={32} h={24} line>
                <path d="M20 6H1v13h19M27 6h4v13h-4M24 1v22M18 1h12M18 23h12" />
                <path d="M5 16l3-7 3 7M6 14h4M13 9v7h3q2-2 0-4h-3M13 9h3q1 2 0 3" />
              </Svg>
            </Tile>
            <Tile aria-label="形状">
              <Svg w={26}>
                <path d="M16 2v9M16 2L2 18h6" fill="none" stroke="currentColor" strokeWidth="2" />
                <path d="M14 10h11v12h-7z" />
                <circle cx="12" cy="19" r="5" fill={c.panel} stroke="currentColor" strokeWidth="2" />
              </Svg>
            </Tile>
            <Tile aria-label="位图">
              <Svg w={22}>
                <path d="M1 2l4-1v4h3v4l-2 3 3 1 2 4 4-1v4l5-1v3H1z" />
                <path d="M9 1q1 9 12 10M14 1q1 5 7 5" fill="none" stroke="currentColor" strokeWidth="2.500" />
              </Svg>
            </Tile>
            <Tile aria-label="图片">
              <Svg w={26} h={20}>
                <path d="M1 1h24v18H1z" fill="none" stroke="currentColor" strokeWidth="1.500" />
                <path d="M1 19v-5l7-5 4 5 4-4 4 1 5 4v4z" />
                <circle cx="17" cy="6" r="2.200" />
              </Svg>
            </Tile>
          </TileGrid>
          <Corners>
            <Svg w={11} line sw={4}><path d="M11 2H2v9" /></Svg>
            <Svg w={11} line sw={4}><path d="M2 0v9h9" /></Svg>
          </Corners>
        </TileArea>
        <Rule />
        <SubHead $margin="2px 0 5px">
          <Svg w={15} line sw={1.500}>
            <path d="M1 8V5q0-2 2-2h9M10 0l3 3-3 3M14 7v3q0 2-2 2H3M5 9l-3 3 3 3" />
          </Svg>
          资源批处理
        </SubHead>
        <TileArea>
          <TileGrid $cols={4}>
            <Tile aria-label="压缩">
              <Svg w={24} line sw={2}>
                <path d="M12 0v9M9 6l3 3 3-3M12 24v-9M9 18l3-3 3 3M0 12h9M6 9l3 3-3 3M24 12h-9M18 9l-3 3 3 3M4 4l3 3M20 4l-3 3M4 20l3-3M20 20l-3-3" />
              </Svg>
            </Tile>
            <Tile aria-label="平滑">
              <Svg w={22} h={18} line sw={2}>
                <path d="M1 4q5 3 9 0t11-1M1 10q5 3 9 0t11-1M1 16q5 3 9 0t11-1" />
              </Svg>
            </Tile>
            <Tile aria-label="导出">
              <Svg w={22}>
                <path d="M11 1l5 6h-3v6H9V7H6zM1 12l6-3v2l-2 1 6 3 6-3-2-1V9l6 3-10 5zM1 15l10 5 10-5v2l-10 5-10-5z" />
              </Svg>
            </Tile>
            <Tile aria-label="输出">
              <Svg w={24} h={20} line sw={2.500}>
                <path d="M17 5V2H2v16h15v-3M9 10h14M18 6l5 4-5 4" />
              </Svg>
            </Tile>
          </TileGrid>
        </TileArea>
      </LibraryBody>
    </Block>
    <TabBar $h={18}>
      <Tab>输出</Tab><Tab $on>对齐</Tab><Tab>颜色</Tab>
    </TabBar>
    <AlignBlock>
      <AlignGrid>
        <span>对齐:</span><span />
        <AlignSet items={align.h} /><AlignSet items={align.v} />
        <span>分布:</span><span />
        <AlignSet items={align.dh} /><AlignSet items={align.dv} />
        <span>匹配大小:</span><span>间隔:</span>
        <AlignSet items={align.size} /><AlignSet items={align.space} />
      </AlignGrid>
      <AlignRule $h={2} $color="#4a4a4a" />
      <CheckRow><Check type="checkbox" defaultChecked />与舞台对齐</CheckRow>
    </AlignBlock>
  </Side>
);

export default function App() {
  return (
    <Screen>
      <Global />
      <MenuBar>
        <Menu>
          <VLine />
          {menus.map((m) => <MenuItem key={m}>{m}</MenuItem>)}
          <VLine />
        </Menu>
        <MenuTools>
          <MenuTool aria-label="共享">
            <Svg w={16} h={17} line sw={2}><path d="M5 6H1v10h14V6h-4M8 11V2M4 5l4-4 4 4" /></Svg>
          </MenuTool>
          <MenuTool aria-label="工作区">
            <Svg w={16} h={14} line sw={1.500}>
              <path d="M1 1h14v12H1z" /><path d="M2.500 3h2v6h-2z" strokeWidth="1" />
            </Svg>
          </MenuTool>
          <Space $w={4} />
          <VLine />
          <Space $w={4} />
          <MenuTool aria-label="测试影片">
            <Svg w={17}><path d="M8.500 0a8.500 8.500 0 010 17 8.500 8.500 0 010-17zM6 4v9l7-4.500z" fillRule="evenodd" /></Svg>
          </MenuTool>
          <EdgeBox />
        </MenuTools>
      </MenuBar>
      <Body>
        <Properties />
        <Middle>
          <Timeline>
            <TabBar>
              <Tab $on>时间轴</Tab>
              <MenuButton aria-label="时间轴菜单"><Burger /></MenuButton>
            </TabBar>
            <TimelineGrid>
              <LayerPane />
              <Frames />
            </TimelineGrid>
            <TimePanel />
            <ClickHalo>
              <Svg w={13} h={20}>
                <path d="M.7.7v16l3.600-3.300 2.500 5.600 2.500-1-2.500-5.500h5z" fill="#fff" stroke="#111" />
              </Svg>
            </ClickHalo>
          </Timeline>
          <Document />
        </Middle>
        <RightDock />
      </Body>
    </Screen>
  );
}
